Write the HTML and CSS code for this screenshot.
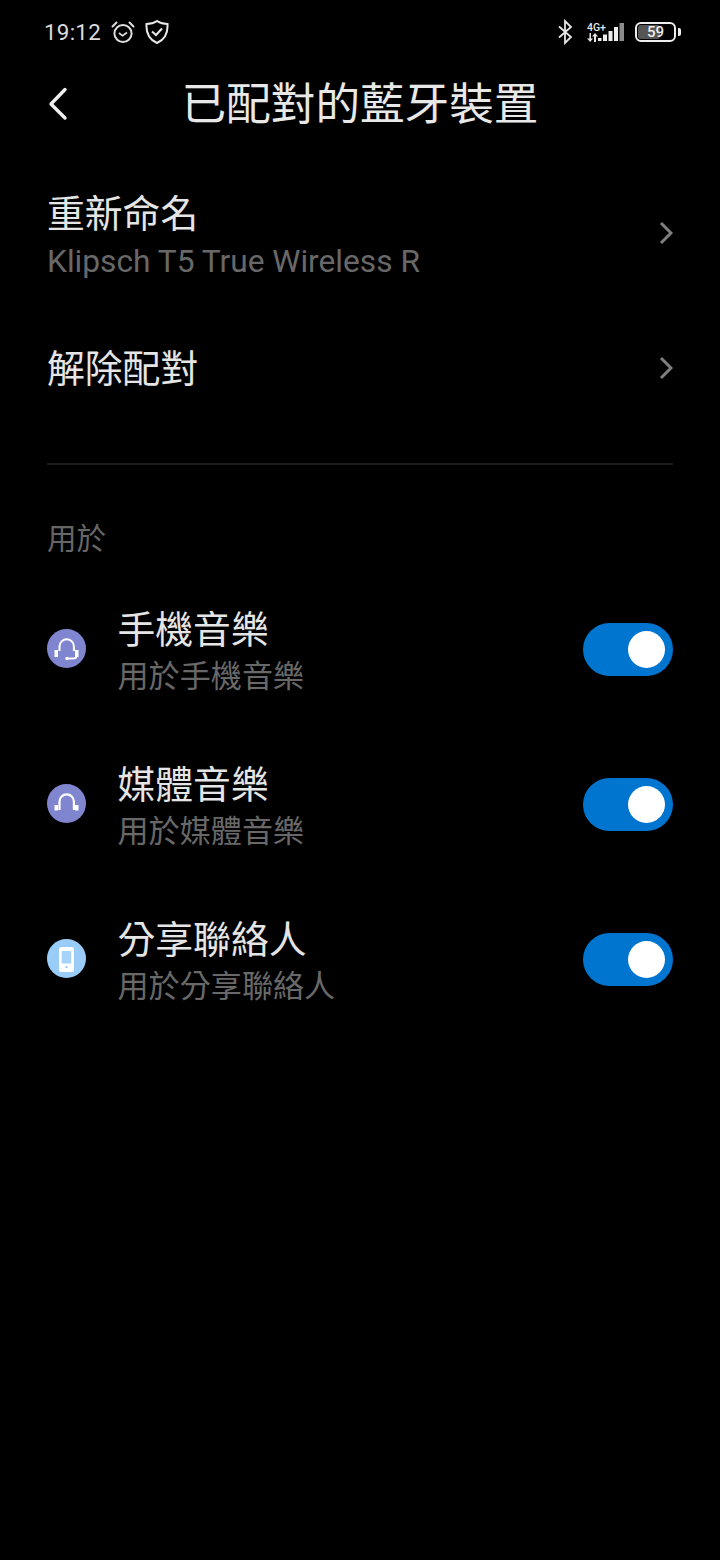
FILE: index.html
```html
<!DOCTYPE html>
<html lang="zh-Hant">
<head>
<meta charset="utf-8">
<title>已配對的藍牙裝置</title>
<link rel="stylesheet" href="styles.css">
</head>
<body>
<div class="status">
  <div class="status-left">
    <span class="time">19:12</span>
    <svg class="ic-alarm" width="24" height="24" viewBox="0 0 24 24" fill="none" stroke="#ddd" stroke-width="2"><circle cx="12" cy="13.500" r="8.600"/><path d="M8 13l3.500 2.800L16 12.500" stroke-width="1.700"/><path d="M1.500 6.500L5.500 2.500M22.500 6.500L18.500 2.500" stroke-linecap="round"/></svg>
    <svg class="ic-shield" width="24" height="26" viewBox="0 0 24 26" fill="none" stroke="#e8e8e8" stroke-width="2"><path d="M12 2c3 2 6.500 3 10.500 3 .5 8-1.500 15-10.500 19C3 20 1 13 1.500 5 5.500 5 9 4 12 2z"/><path d="M7 12.500l4 3.500 6-6.500" stroke-width="2"/></svg>
  </div>
  <div class="status-right">
    <svg width="16" height="26" viewBox="0 0 16 26" fill="none" stroke="#e6e6e6" stroke-width="1.800"><path d="M2 7.500l12 10.500L8 24V2l6 6L2 18.500"/></svg>
    <div class="net">
      <span class="net-label">4G+</span>
      <svg class="net-arrows" width="11" height="9" viewBox="0 0 11 9" fill="#e6e6e6"><path d="M2.500 0h1.500v5.500H6L3.200 9 0 5.500h2.500zM7 3.500H5L8 0l3 3.500H9V9H7z"/></svg>
    </div>
    <svg class="signal" width="27" height="18" viewBox="0 0 27 18" fill="#eee"><rect x="0" y="15" width="3.500" height="3"/><rect x="5" y="11.500" width="4" height="6.500"/><rect x="10.500" y="8" width="4" height="10"/><rect x="16" y="4" width="4" height="14"/><rect x="21.500" y="0" width="4.500" height="18" fill="#8a8a8a"/></svg>
    <div class="battery">
      <div class="batt-body"><span class="batt-fill"></span><span class="batt-num">59</span></div>
      <span class="batt-tip"></span>
    </div>
  </div>
</div>

<header class="title-bar">
  <svg class="back" width="24" height="36" viewBox="0 0 24 36" fill="none" stroke="#eee" stroke-width="3.400" stroke-linecap="round" stroke-linejoin="round"><path d="M18 3.500L4 18l14 14"/></svg>
  <h1 class="title">已配對的藍牙裝置</h1>
</header>

<section class="links">
  <a class="link link-first">
    <div class="link-text">
      <div class="main">重新命名</div>
      <div class="sub latin">Klipsch T5 True Wireless R</div>
    </div>
    <svg class="chev" width="14" height="24" viewBox="0 0 14 24" fill="none" stroke="#7f7f7f" stroke-width="3"><path d="M2 2l10 10L2 22"/></svg>
  </a>
  <a class="link link-second">
    <div class="link-text"><div class="main">解除配對</div></div>
    <svg class="chev" width="14" height="24" viewBox="0 0 14 24" fill="none" stroke="#7f7f7f" stroke-width="3"><path d="M2 2l10 10L2 22"/></svg>
  </a>
</section>

<hr class="divider">

<div class="section-label">用於</div>

<section class="rows">
  <div class="row">
    <span class="badge purple">
      <svg width="39" height="39" viewBox="0 0 39 39" fill="none" stroke="#fff" stroke-width="2"><path d="M12.500 22v-4.500a7.200 7.200 0 0 1 14.400 0V22"/><path d="M29.500 27c0 1.500-1.500 2.500-4 2.500H21"/><rect x="7.500" y="21" width="3.500" height="7" fill="#fff" stroke="none"/><rect x="28" y="21" width="3.500" height="7" fill="#fff" stroke="none"/><circle cx="20" cy="29.500" r="1.700" fill="#fff" stroke="none"/></svg>
    </span>
    <div class="row-text"><div class="main">手機音樂</div><div class="sub">用於手機音樂</div></div>
    <span class="toggle"><span class="knob"></span></span>
  </div>
  <div class="row">
    <span class="badge purple">
      <svg width="39" height="39" viewBox="0 0 39 39" fill="none" stroke="#fff" stroke-width="2.200"><path d="M12.500 26v-8.500a7.200 7.200 0 0 1 14.400 0V26"/><rect x="7.500" y="21" width="3.500" height="5.500" fill="#fff" stroke="none"/><rect x="28" y="21" width="3.500" height="5.500" fill="#fff" stroke="none"/></svg>
    </span>
    <div class="row-text"><div class="main">媒體音樂</div><div class="sub">用於媒體音樂</div></div>
    <span class="toggle"><span class="knob"></span></span>
  </div>
  <div class="row">
    <span class="badge blue">
      <svg width="39" height="39" viewBox="0 0 39 39"><rect x="12" y="8" width="15" height="25" rx="2" fill="#fff"/><rect x="14.700" y="12" width="9.500" height="12.500" fill="#a6d3fa"/><circle cx="19.500" cy="28" r="1.200" fill="#9accf8"/></svg>
    </span>
    <div class="row-text"><div class="main">分享聯絡人</div><div class="sub">用於分享聯絡人</div></div>
    <span class="toggle"><span class="knob"></span></span>
  </div>
</section>
</body>
</html>
```
FILE: styles.css
```css
* { box-sizing: border-box; }
html, body { margin: 0; padding: 0; }
body {
  width: 720px;
  height: 1560px;
  background: #000;
  color: #e5e5e5;
  font-family: Roboto, "Noto Sans CJK TC", sans-serif;
  overflow: hidden;
}
.status {
  height: 63px;
  padding: 0 39px 0 44px;
  display: flex;
  align-items: center;
  justify-content: space-between;
}
.status-left, .status-right { display: flex; align-items: center; }
.time { font-size: 22.300px; color: #dcdcdc; letter-spacing: .3px; }
.ic-alarm { margin-left: 10px; }
.ic-shield { margin-left: 10px; }
.net {
  width: 11px;
  height: 20px;
  margin-left: 14px;
  display: flex;
  flex-direction: column;
  align-items: flex-start;
  color: #e6e6e6;
}
.net-label { font-size: 10.500px; line-height: 11px; font-weight: 500; white-space: nowrap; }
.net-arrows { display: block; }
.signal { margin-top: 1px; }
.battery { display: flex; align-items: center; margin-left: 10px; }
.batt-body {
  position: relative;
  width: 41px;
  height: 20px;
  border: 2px solid #eee;
  border-radius: 6px;
  display: flex;
  align-items: center;
  justify-content: center;
  overflow: hidden;
}
.batt-fill { position: absolute; left: 1px; top: 1px; bottom: 1px; width: 22px; background: #555; border-radius: 3px; }
.batt-num { position: relative; font-size: 15px; font-weight: 500; color: #eee; }
.batt-tip { width: 3px; height: 8px; margin-left: 2px; background: #eee; border-radius: 0 2px 2px 0; }

.title-bar {
  height: 82px;
  position: relative;
  display: flex;
  align-items: center;
  justify-content: center;
}
.back { position: absolute; left: 47px; top: 23px; }
.title { margin: 0; padding-top: 2px; font-size: 44.600px; font-weight: 400; color: #e8e8e8; line-height: 82px; }

.links { padding: 0 47px; }
.link { display: flex; align-items: center; justify-content: space-between; }
.link-first { margin-top: 46px; height: 89px; }
.link-first .chev { margin-top: -6px; }
.link-second { margin-top: 66px; height: 44px; }
.main { font-size: 37.800px; line-height: 44px; color: #e5e5e5; }
.sub { margin-top: 6px; font-size: 31.100px; line-height: 38px; color: #686868; }
.sub.latin { margin-top: 7px; font-size: 31.700px; }
.link-text { padding-top: 1px; }

.divider { margin: 73px 47px 0; border: 0; border-top: 2px solid #1b1b1b; }
.section-label { margin: 57px 47px 0; font-size: 29.500px; line-height: 34px; color: #666; }

.rows { margin-top: 16px; }
.row { height: 155px; padding: 0 47px; display: flex; align-items: center; }
.badge { width: 39px; height: 39px; border-radius: 50%; display: flex; align-items: center; justify-content: center; flex: none; margin-top: -2px; }
.purple { background: #7f85cf; }
.blue { background: #9accf8; }
.row-text { margin-left: 31.500px; flex: 1; padding-top: 4px; }
.toggle { width: 90px; height: 53px; border-radius: 27px; background: #0075cf; position: relative; flex: none; }
.knob { position: absolute; left: 45px; top: 8px; width: 37px; height: 37px; border-radius: 50%; background: #fff; }
```
